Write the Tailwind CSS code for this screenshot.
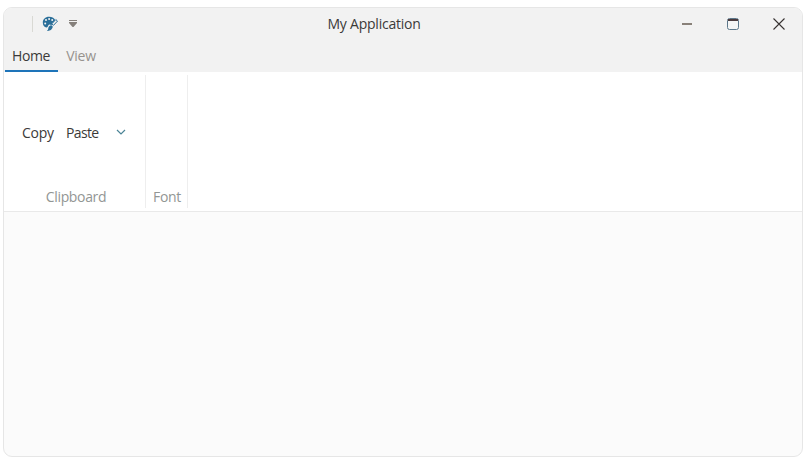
<!DOCTYPE html>
<html lang="en">
  <head>
    <meta charset="UTF-8" />
    <meta name="viewport" content="width=device-width, initial-scale=1.0" />
    <title>My Application</title>
    <script src="https://cdn.jsdelivr.net/npm/@tailwindcss/browser@4"></script>
  </head>
  <body class="h-screen overflow-hidden bg-white pt-[7px] pl-[3px] font-['Open_Sans','Noto_Sans',sans-serif] text-[14px] leading-5 tracking-[-0.3px] text-[#3b3a39]">
    <div class="flex h-[450px] w-[800px] flex-col overflow-hidden rounded-[9px] border border-[#e6e6e6] bg-[#fbfbfb]">
      <!-- title bar -->
      <header class="grid h-8 shrink-0 grid-cols-[1fr_93px_1fr] items-center bg-[#f2f2f2]">
        <div class="flex items-center pl-7">
          <div class="h-4 w-px bg-[#d9d9d4]"></div>
          <svg class="ml-[9px] h-4 w-4" viewBox="0 0 16 16">
            <path fill="#2b6f99" fill-rule="evenodd" d="M7 .8C3.300.8.8 3.300.8 6.600c0 3 1.700 5 3.900 4.800 1.600-.2.900-2.100 2.200-2.700 1.300-.4 1.800.6 3 .1L13.500 4.700C12.600 2.200 10.200.8 7 .8ZM4 3a1 1 0 1 1 0 2 1 1 0 0 1 0-2ZM7.100 1.900a1 1 0 1 1 0 2 1 1 0 0 1 0-2ZM10.200 3a1 1 0 1 1 0 2 1 1 0 0 1 0-2ZM3.200 6.500a1 1 0 1 1 0 2 1 1 0 0 1 0-2Z" />
            <path fill="#f2f2f2" stroke="#2b6f99" stroke-width="1" d="m9.800 7.800 4-4.200 1.700 1.500-4 4.200Z" />
            <path fill="#2b6f99" d="M8.400 9.400c1.400-.5 2.800.7 2.200 2.200-.7 2.200-2.700 3.700-5.800 3.300 1-.6 1.300-1.300 1.500-2.700.2-1.400.9-2.400 2.100-2.800Z" />
          </svg>
          <svg class="ml-[11px] h-2 w-2" viewBox="0 0 8 8">
            <path fill="#85807b" d="M0 0h8v1H0zM0 2h8v1L4.500 7h-1L0 3z" />
          </svg>
        </div>
        <div class="relative -left-[29px] whitespace-nowrap tracking-[-0.23px]">My Application</div>
        <div class="flex items-center justify-end">
          <div class="flex w-[46px] justify-center">
            <svg class="h-3 w-3" viewBox="0 0 12 12"><path fill="#898179" d="M1 5h10v2H1z" /></svg>
          </div>
          <div class="flex w-[46px] justify-center">
            <svg class="h-3 w-3" viewBox="0 0 12 12">
              <rect x=".5" y=".5" width="11" height="11" rx="2" fill="#f4f5f5" stroke="#5d788b" />
              <path fill="#4a3b3e" d="M1 1h10v2H1z" />
            </svg>
          </div>
          <div class="flex w-[46px] justify-center">
            <svg class="h-3 w-3" viewBox="0 0 12 12"><path stroke="#383332" stroke-width="1.100" d="m.5.5 11 11m0-11-11 11" /></svg>
          </div>
        </div>
      </header>

      <nav class="flex h-8 shrink-0 bg-[#f2f2f2] pl-px">
        <div class="flex w-[53px] justify-center border-b-2 border-[#1e74b9] pt-[6px] pr-px tracking-[-0.45px]">Home</div>
        <div class="w-[46px] pt-[6px] text-center text-[#97928e]">View</div>
      </nav>

      <!-- ribbon -->
      <main class="flex h-[140px] shrink-0 border-b border-[#e9e9e9] bg-white pt-[3px] pb-[3px]">
        <section class="flex w-[142px] flex-col border-r border-[#eeeeee]">
          <div class="flex flex-1 items-center pt-1 pl-[18px]">
            <span class="w-11">Copy</span>
            <span class="w-[50px] tracking-[-0.65px]">Paste</span>
            <svg class="relative -top-px h-[10px] w-[10px]" viewBox="0 0 10 10"><path fill="none" stroke="#4b8496" stroke-width="1.200" d="m1 3 4 4 4-4" /></svg>
          </div>
          <div class="h-[21px] pl-[3px] text-center tracking-[-0.35px] text-[#929694]">Clipboard</div>
        </section>
        <section class="flex w-[42px] flex-col justify-end border-r border-[#eeeeee]">
          <div class="h-[21px] pl-px text-center text-[#929694]">Font</div>
        </section>
      </main>
    </div>
  </body>
</html>
